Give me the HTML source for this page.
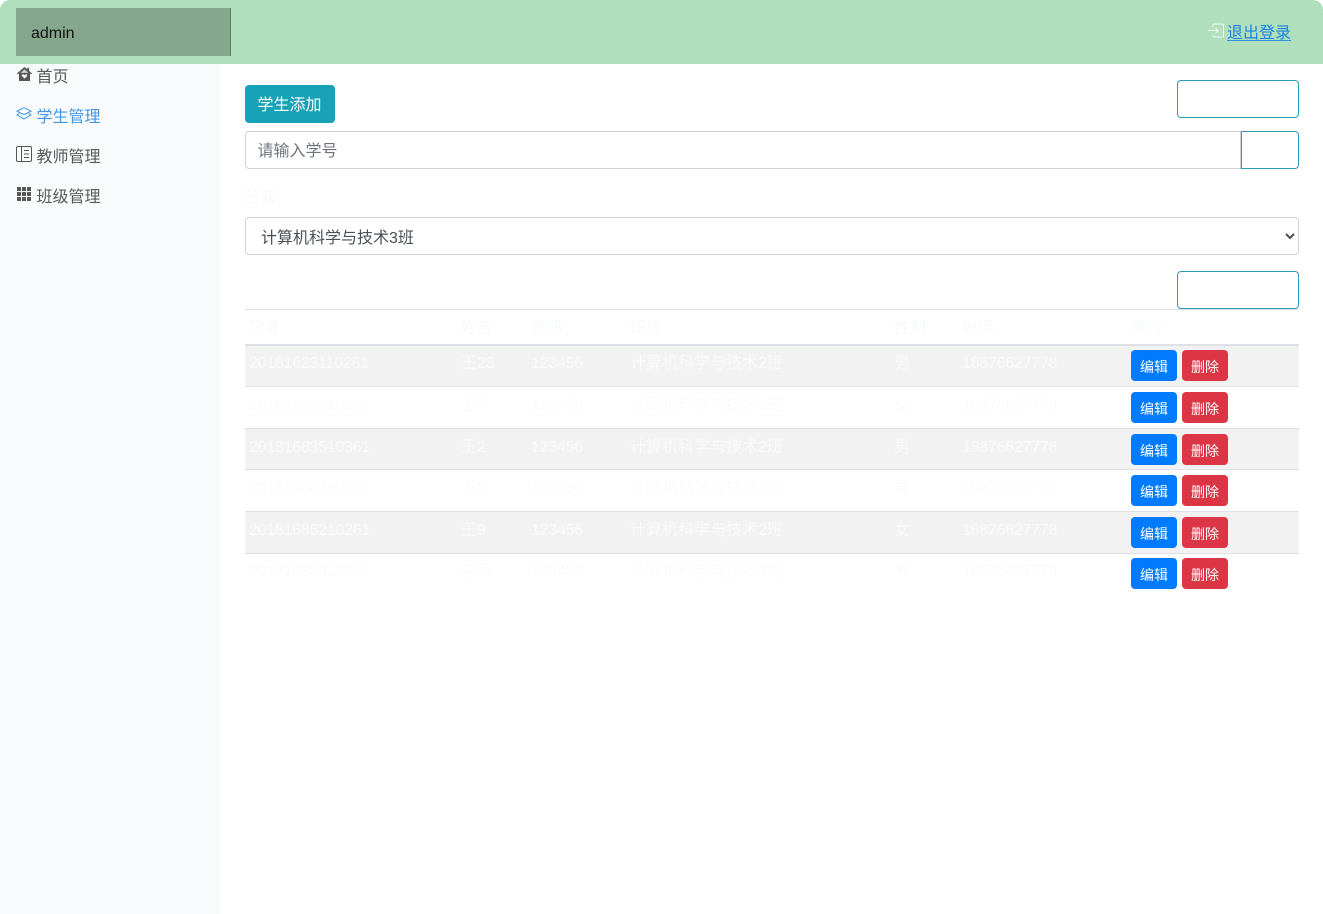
<!DOCTYPE html>
<html lang="zh-CN">
<head>
<meta charset="utf-8">
<title>学生管理</title>
<style>
*{box-sizing:border-box}
html,body{margin:0;padding:0;background:#fff}
body{position:relative;width:1323px;height:914px;overflow:hidden;font-family:"Liberation Sans","Noto Sans CJK SC",sans-serif;font-size:16px;line-height:24px;color:#212529}
.top{position:absolute;left:0;top:0;width:1323px;height:64px;background:#b0dfbb;border-radius:10px 10px 0 0}
.brand{position:absolute;left:16px;top:8px;width:215px;height:48px;background:#85a78c;border-right:1px solid #5d7a63;padding:14px 0 0 15px;color:#111}
.logout{position:absolute;left:1227px;top:22px;color:#1a82e6;white-space:nowrap}
.logout::after{content:"";position:absolute;left:0;right:0;top:18px;height:1px;background:#3a90dc}
.logicon{position:absolute;left:1208px;top:23px}
.side{position:absolute;left:0;top:64px;width:221px;height:850px;background:#f8fafc}
.side a{position:absolute;left:36.5px;color:#595959;white-space:nowrap}
.side a.on{color:#3f97e6}
.side svg{position:absolute}
.btn-add{position:absolute;left:245px;top:85px;width:90px;height:38px;background:#17a2b8;border-radius:4px;color:#fff;padding:9px 0 0 12.5px}
.box{position:absolute;border:1px solid #2a9fb3;background:#fff}
.r{left:1177px;width:122px;height:38px;border-radius:4px}
.inp{position:absolute;left:245px;top:131px;width:996px;height:38px;border:1px solid #ced4da;border-radius:4px 0 0 4px;color:#6c757d;padding:8px 11.5px 0;background:#fff}
.lab{position:absolute;left:245px;top:187px;color:#f8f9fa}
select{position:absolute;left:245px;top:217px;width:1054px;height:38px;border:1px solid #ced4da;border-radius:4px;background:#fff;color:#495057;font:16px/24px "Liberation Sans","Noto Sans CJK SC",sans-serif;padding:8px 11px 4px}
table{position:absolute;left:245px;top:309px;width:1054px;border-collapse:separate;border-spacing:0;table-layout:fixed;color:#f9fafb}
th,td{padding:7px 4px 0;vertical-align:top;text-align:left;border-bottom:1px solid #dee2e6;white-space:nowrap;overflow:hidden}
th{height:37px;padding-top:7px;border-top:1px solid #dee2e6;border-bottom:2px solid #dee2e6;font-weight:700;color:#fafbfc}
tbody tr{height:42px}
tbody tr.s{height:41px}
tbody tr.s td{padding-top:6px}
tbody tr:last-child td{border-bottom:0}
tbody tr:nth-child(odd) td{background:#f2f2f2}
tbody tr:nth-child(even) td{color:#fbfbfc}
tbody tr:last-child td{background:#fff;color:#fbfbfc}
.n{letter-spacing:-.25px}
.b{display:inline-block;width:46px;height:31px;border-radius:4px;color:#fff;font-size:14px;line-height:21px;text-align:center;padding-top:7px;vertical-align:top;margin-top:-2px}
.e{background:#007bff}
.d{background:#dc3545;margin-left:5px}
</style>
</head>
<body>
<div class="top">
  <div class="brand">admin</div>
  <svg class="logicon" width="16" height="15" viewBox="0 0 16 15" fill="none" stroke="#eef8f0" stroke-width="1"><path d="M5 3.5V2a1 1 0 0 1 1-1h8.500a1 1 0 0 1 1 1v11a1 1 0 0 1-1 1H6a1 1 0 0 1-1-1v-1.500"/><path d="M0 7.500h10M7.500 4.700l2.800 2.800-2.800 2.800"/></svg>
  <a class="logout">退出登录</a>
</div>
<div class="side">
  <svg style="left:17px;top:3px" width="15" height="14" viewBox="0 0 15 14"><path d="M7.500 0 0 6.400l.8 1L2 6.400V14h11V6.400l1.200 1 .8-1-3-2.600V.8h-1.800v1.400z" fill="#555"/><path d="M7.500 2.400 3.400 5.900h8.200z" fill="#f8fafc" opacity=".75"/><path d="M7.500 11.600 5.100 9.100c-.9-1 .6-2.500 1.600-1.600l.8.7.8-.7c1-.9 2.500.6 1.600 1.600z" fill="#f8fafc"/></svg>
  <a style="top:0;margin-top:0;top:2px">首页</a>
  <svg style="left:16px;top:43px" width="16" height="13" viewBox="0 0 16 13" fill="none" stroke="#3f97e6" stroke-width="1"><path d="M8 .7 15 4.200 8 7.700 1 4.200z"/><path d="M3.400 6.200 1 8l7 4 7-4-2.400-1.800"/></svg>
  <a class="on" style="top:42px">学生管理</a>
  <svg style="left:16px;top:82px" width="16" height="16" viewBox="0 0 16 16" fill="none" stroke="#555" stroke-width="1"><rect x=".5" y=".5" width="15" height="15" rx="1.500"/><path d="M5.500 .5v15M8 4.500h5M8 8h5M8 11.500h5"/></svg>
  <a style="top:82px">教师管理</a>
  <svg style="left:17px;top:123px" width="14" height="14" viewBox="0 0 14 14" fill="#555"><rect x="0" y="0" width="4" height="4" rx=".6"/><rect x="5" y="0" width="4" height="4" rx=".6"/><rect x="10" y="0" width="4" height="4" rx=".6"/><rect x="0" y="5" width="4" height="4" rx=".6"/><rect x="5" y="5" width="4" height="4" rx=".6"/><rect x="10" y="5" width="4" height="4" rx=".6"/><rect x="0" y="10" width="4" height="4" rx=".6"/><rect x="5" y="10" width="4" height="4" rx=".6"/><rect x="10" y="10" width="4" height="4" rx=".6"/></svg>
  <a style="top:122px">班级管理</a>
</div>
<div class="btn-add">学生添加</div>
<div class="box r" style="top:80px"></div>
<div class="inp">请输入学号</div>
<div class="box" style="left:1241px;top:131px;width:58px;height:38px;border-radius:0 4px 4px 0"></div>
<div class="lab">班级:</div>
<select><option>计算机科学与技术3班</option></select>
<div class="box r" style="top:271px"></div>
<table>
<colgroup><col style="width:212px"><col style="width:70px"><col style="width:99px"><col style="width:264px"><col style="width:68px"><col style="width:169px"><col style="width:172px"></colgroup>
<thead><tr><th>学号</th><th>姓名</th><th>密码</th><th>班级</th><th>性别</th><th>电话</th><th>操作</th></tr></thead>
<tbody>
<tr class="s"><td class="n">20181623110261</td><td>王23</td><td class="n">123456</td><td>计算机科学与技术2班</td><td>男</td><td class="n">18876627778</td><td><span class="b e">编辑</span><span class="b d">删除</span></td></tr>
<tr><td class="n">20181682210261</td><td>王7</td><td class="n">123456</td><td>计算机科学与技术2班</td><td>女</td><td class="n">18876627778</td><td><span class="b e">编辑</span><span class="b d">删除</span></td></tr>
<tr class="s"><td class="n" style="padding-top:7px">20181683510361</td><td style="padding-top:7px">王2</td><td class="n" style="padding-top:7px">123456</td><td style="padding-top:7px">计算机科学与技术2班</td><td style="padding-top:7px">男</td><td class="n" style="padding-top:7px">18876627778</td><td style="padding-top:7px"><span class="b e">编辑</span><span class="b d">删除</span></td></tr>
<tr><td class="n">20181684340261</td><td>王8</td><td class="n">123456</td><td>计算机科学与技术2班</td><td>男</td><td class="n">18876627778</td><td><span class="b e">编辑</span><span class="b d">删除</span></td></tr>
<tr><td class="n">20181685210261</td><td>王9</td><td class="n">123456</td><td>计算机科学与技术2班</td><td>女</td><td class="n">18876627778</td><td><span class="b e">编辑</span><span class="b d">删除</span></td></tr>
<tr class="s"><td class="n">20181685310261</td><td>李飞</td><td class="n">123456</td><td>计算机科学与技术3班</td><td>男</td><td class="n">18876627778</td><td><span class="b e">编辑</span><span class="b d">删除</span></td></tr>
</tbody>
</table>
</body>
</html>
